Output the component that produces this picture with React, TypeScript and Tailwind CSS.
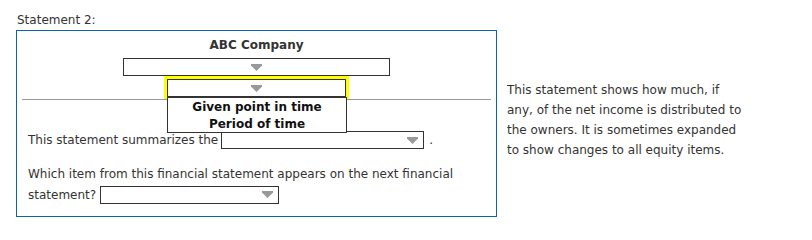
import React from "react";

function Arrow() {
  return (
    <svg width="11" height="7" viewBox="0 0 11 7" className="block">
      <path d="M0 0h11v1.5L5.5 7 0 1.5z" fill="#999999" />
    </svg>
  );
}

function Select({ width, centered }: { width: string; centered?: boolean }) {
  return (
    <div
      className={`${width} h-[18px] border border-[#333333] bg-white flex items-center ${
        centered ? "justify-center" : "justify-end pr-[5px]"
      }`}
    >
      <Arrow />
    </div>
  );
}

export default function App() {
  return (
    <div
      className="w-[812px] h-[240px] bg-white pl-[16px] pt-[12px] text-[12px] leading-[16px] text-[#333333]"
      style={{ fontFamily: '"DejaVu Sans", Verdana, sans-serif' }}
    >
      <div className="pl-[1px]">Statement 2:</div>
      <div className="flex items-start mt-[2px]">
        {/* Statement box */}
        <div className="relative w-[481px] h-[187px] border border-[#0b67a2] pt-[6px]">
          <div className="text-center font-bold">ABC Company</div>
          <div className="flex justify-center mt-[5px]">
            <Select width="w-[267px]" centered />
          </div>
          <div className="flex justify-center">
            <div className="w-[185px] h-[23px] border-[3px] border-b-0 border-[#ffff00]">
              <Select width="w-full" centered />
            </div>
          </div>
          <div className="mx-[5px] h-px bg-[#999999]" />

          {/* Open dropdown list */}
          <div className="absolute left-[150px] top-[66px] w-[180px] h-[36px] border border-[#333333] bg-white z-10 flex flex-col items-center font-bold text-[#111111] leading-[17px]">
            <div className="pt-px">Given point in time</div>
            <div>Period of time</div>
          </div>

          <div className="flex items-center pl-[11px] mt-[31px]">
            <span>This statement summarizes the</span>
            <div className="ml-[3px]">
              <Select width="w-[203px]" />
            </div>
            <span className="ml-[5px]">.</span>
          </div>

          <div className="pl-[11px] mt-[15px] leading-[20px]">
            Which item from this financial statement appears on the next financial
            <br />
            <span className="inline-flex items-center align-middle">
              statement?
              <span className="ml-[4px] inline-block">
                <Select width="w-[179px]" />
              </span>
            </span>
          </div>
        </div>

        {/* Description */}
        <div className="ml-[10px] mt-[50px] w-[240px] leading-[20px]">
          This statement shows how much, if any, of the net income is distributed to
          the owners. It is sometimes expanded to show changes to all equity items.
        </div>
      </div>
    </div>
  );
}
